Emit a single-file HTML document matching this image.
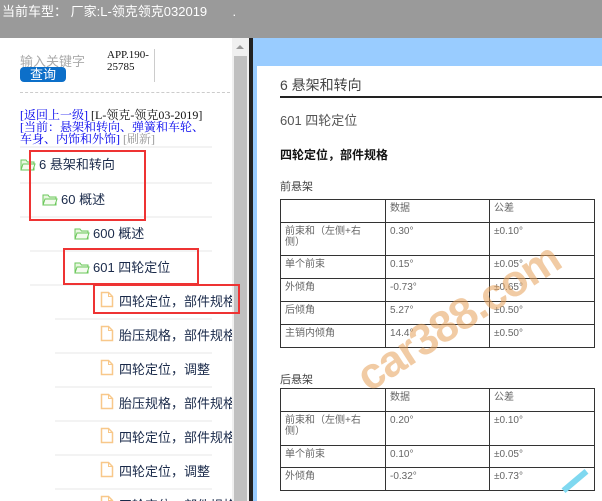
<!DOCTYPE html>
<html><head><meta charset="utf-8"><style>
*{margin:0;padding:0;box-sizing:border-box}
body{width:602px;height:501px;overflow:hidden;position:relative;background:#fff;font-family:"Liberation Sans","Noto Sans CJK SC",sans-serif}
.a{position:absolute;white-space:nowrap}
#top{left:0;top:0;width:602px;height:38px;background:#9a9a9a;color:#fff;font-size:13px;padding:1px 0 0 2px}
.sep{position:absolute;height:2px;background:#f3f3f3}
.row{position:absolute;font-size:13px;color:#1a2a4a;font-family:"Liberation Sans","WenQuanYi Zen Hei",sans-serif;white-space:nowrap}
.red{position:absolute;border:2px solid #ee3333}
table{position:absolute;border-collapse:collapse;font-size:10px;line-height:11px;color:#666}
td{border:1.5px solid #333;padding:3px 4px 0 4px;vertical-align:top;overflow:hidden}
</style></head><body>
<div id="top" class="a">当前车型：&nbsp;厂家:L-领克领克032019 &nbsp; &nbsp; &nbsp; .</div>
<div class="a" style="left:20px;top:51px;font-size:13px;color:#aaa">输入关键字</div>
<div class="a" style="left:20px;top:67px;width:46px;height:15px;background:#0c6fc9;border-radius:4px;color:#fff;font-size:13px;line-height:15px;text-align:center">查询</div>
<div class="a" style="left:107px;top:49px;font-family:'Liberation Serif',serif;font-size:11px;line-height:12px;color:#111">APP.190-<br>25785</div>
<div class="a" style="left:154px;top:49px;width:1px;height:33px;background:#ccc"></div>
<div class="a" style="left:20px;top:92px;width:210px;border-top:1px dashed #ccc"></div>
<div class="a" style="left:20px;top:109px;font-family:'Liberation Serif','Noto Serif CJK SC',serif;font-size:12px;line-height:12px;color:#0000ee">[返回上一级] <span style="color:#111">[L-领克-领克03-2019]</span><br>[当前：悬架和转向、弹簧和车轮、<br>车身、内饰和外饰] <span style="color:#999">[刷新]</span></div>
<div class="sep" style="left:20px;top:146px;width:192px"></div>
<svg width="0" height="0" style="position:absolute"><defs>
<symbol id="fd" viewBox="0 0 16 13"><path d="M1 2h5l1.5 2H14v8H1z" fill="#e8f7e0" stroke="#6ac75a"/><path d="M1 12l2-6h12l-2 6z" fill="#f4fbef" stroke="#6ac75a"/></symbol>
<symbol id="fl" viewBox="0 0 14 17"><path d="M1.5 1.5h7l4 4v10h-11z" fill="#fff" stroke="#f8c88a" stroke-width="1.5"/><path d="M8.5 1.5v4h4" fill="none" stroke="#f8c88a"/></symbol>
</defs></svg>
<svg class="a" style="left:20px;top:158px" width="16" height="13"><use href="#fd"/></svg><div class="row" style="left:39px;top:154px">6 悬架和转向</div>
<div class="sep" style="left:20px;top:182px;width:192px"></div>
<svg class="a" style="left:42px;top:193px" width="16" height="13"><use href="#fd"/></svg><div class="row" style="left:61px;top:189px">60 概述</div>
<div class="sep" style="left:20px;top:216px;width:192px"></div>
<svg class="a" style="left:74px;top:227px" width="16" height="13"><use href="#fd"/></svg><div class="row" style="left:93px;top:223px">600 概述</div>
<div class="sep" style="left:30px;top:250px;width:182px"></div>
<svg class="a" style="left:74px;top:261px" width="16" height="13"><use href="#fd"/></svg><div class="row" style="left:93px;top:257px">601 四轮定位</div>
<div class="sep" style="left:30px;top:284px;width:182px"></div>
<div style="position:absolute;left:0;top:0;width:232px;height:501px;overflow:hidden">
<svg class="a" style="left:100px;top:291px" width="14" height="17"><use href="#fl"/></svg><div class="row" style="left:119px;top:291px">四轮定位，部件规格</div>
<div class="sep" style="left:55px;top:318px;width:157px"></div>
<svg class="a" style="left:100px;top:325px" width="14" height="17"><use href="#fl"/></svg><div class="row" style="left:119px;top:325px">胎压规格，部件规格</div>
<div class="sep" style="left:55px;top:352px;width:157px"></div>
<svg class="a" style="left:100px;top:359px" width="14" height="17"><use href="#fl"/></svg><div class="row" style="left:119px;top:359px">四轮定位，调整</div>
<div class="sep" style="left:55px;top:386px;width:157px"></div>
<svg class="a" style="left:100px;top:393px" width="14" height="17"><use href="#fl"/></svg><div class="row" style="left:119px;top:393px">胎压规格，部件规格</div>
<div class="sep" style="left:55px;top:420px;width:157px"></div>
<svg class="a" style="left:100px;top:427px" width="14" height="17"><use href="#fl"/></svg><div class="row" style="left:119px;top:427px">四轮定位，部件规格</div>
<div class="sep" style="left:55px;top:454px;width:157px"></div>
<svg class="a" style="left:100px;top:461px" width="14" height="17"><use href="#fl"/></svg><div class="row" style="left:119px;top:461px">四轮定位，调整</div>
<div class="sep" style="left:55px;top:488px;width:157px"></div>
<svg class="a" style="left:100px;top:495px" width="14" height="17"><use href="#fl"/></svg><div class="row" style="left:119px;top:495px">四轮定位，部件规格</div>
</div>
<div class="a" style="left:232px;top:38px;width:17px;height:463px;background:#f0f0f0"></div>
<div class="a" style="left:234px;top:56px;width:13px;height:445px;background:#c0c0c0"></div>
<div class="a" style="left:236px;top:45px;width:0;height:0;border:4px solid transparent;border-bottom:4px solid #999;border-top:0"></div>
<div class="a" style="left:249px;top:38px;width:4px;height:463px;background:#222"></div>
<div class="red" style="left:29px;top:150px;width:117px;height:71px"></div>
<div class="red" style="left:63px;top:248px;width:136px;height:37px"></div>
<div class="red" style="left:93px;top:284px;width:147px;height:30px"></div>
<div class="a" style="left:253px;top:38px;width:349px;height:463px;background:#99ccff"></div>
<div class="a" style="left:257px;top:66px;width:345px;height:435px;background:#fff"></div>
<div class="a" style="left:280px;top:75px;font-size:14px;color:#444">6 悬架和转向</div>
<div class="a" style="left:280px;top:96px;width:322px;height:2px;background:#222"></div>
<div class="a" style="left:280px;top:110px;font-size:13px;color:#555">601 四轮定位</div>
<div class="a" style="left:280px;top:146px;font-size:12px;font-weight:bold;color:#111">四轮定位，部件规格</div>
<div class="a" style="left:280px;top:178px;font-size:11px;color:#444">前悬架</div>
<table style="left:280px;top:199px;width:315px">
<tr style="height:23px"><td style="width:105px"></td><td style="width:104px">数据</td><td>公差</td></tr>
<tr style="height:33px"><td>前束和（左侧+右<br>侧）</td><td>0.30°</td><td>±0.10°</td></tr>
<tr style="height:23px"><td>单个前束</td><td>0.15°</td><td>±0.05°</td></tr>
<tr style="height:23px"><td>外倾角</td><td>-0.73°</td><td>±0.65°</td></tr>
<tr style="height:23px"><td>后倾角</td><td>5.27°</td><td>±0.50°</td></tr>
<tr style="height:23px"><td>主销内倾角</td><td>14.4°</td><td>±0.50°</td></tr>
</table>
<div class="a" style="left:280px;top:371px;font-size:11px;color:#444">后悬架</div>
<table style="left:280px;top:388px;width:315px">
<tr style="height:23px"><td style="width:105px"></td><td style="width:104px">数据</td><td>公差</td></tr>
<tr style="height:34px"><td>前束和（左侧+右<br>侧）</td><td>0.20°</td><td>±0.10°</td></tr>
<tr style="height:22px"><td>单个前束</td><td>0.10°</td><td>±0.05°</td></tr>
<tr style="height:23px"><td>外倾角</td><td>-0.32°</td><td>±0.73°</td></tr>
</table>
<div class="a" style="left:375px;top:352px;font-size:44px;font-weight:bold;color:rgba(230,160,90,0.55);transform:rotate(-33deg);transform-origin:left bottom;letter-spacing:-1px">car388.com</div>
<div class="a" style="left:560px;top:478px;width:30px;height:6px;background:#7fd8f0;transform:rotate(-40deg)"></div>
</body></html>
